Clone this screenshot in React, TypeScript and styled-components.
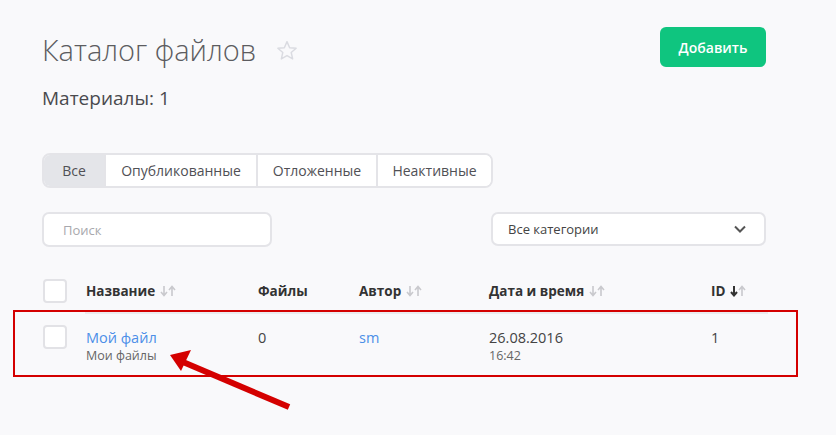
import React from "react";
import styled, { createGlobalStyle } from "styled-components";

const Global = createGlobalStyle`
  html, body { margin: 0; padding: 0; background: #f9f9fb; }
  body { font-family: "Open Sans", "Noto Sans", sans-serif; color: #444; }
  * { box-sizing: border-box; }
`;

const Page = styled.div`
  position: relative;
  width: 836px;
  height: 435px;
  padding: 27px 70px 0 42px;
  overflow: hidden;
`;

const TopRow = styled.div`
  display: flex;
  justify-content: space-between;
  align-items: flex-start;
`;

const TitleWrap = styled.div`
  display: flex;
  align-items: center;
  gap: 20px;
  padding-top: 4px;
`;

const Title = styled.h1`
  margin: 0;
  font-size: 29px;
  font-weight: 300;
  color: #5c5c60;
  line-height: 38px;
`;

const AddButton = styled.button`
  width: 106px;
  height: 40px;
  border: none;
  border-radius: 6px;
  background: #0fc57f;
  color: #fff;
  font-family: inherit;
  font-weight: 600;
  font-size: 14px;
`;

const Count = styled.div`
  margin-top: 16px;
  font-size: 19px;
  color: #4a4a4e;
  line-height: 26px;
`;

const Tabs = styled.div`
  display: inline-flex;
  margin-top: 42px;
  height: 35px;
  border: 2px solid #e4e4e8;
  border-radius: 8px;
  overflow: hidden;
  background: #fff;
`;

const Tab = styled.div<{ $active?: boolean; $w: number }>`
  width: ${(p) => p.$w}px;
  display: flex;
  align-items: center;
  justify-content: center;
  font-size: 14px;
  color: #505055;
  background: ${(p) => (p.$active ? "#e4e5e9" : "#fff")};
  & + & { border-left: 2px solid #e4e4e8; }
`;

const FilterRow = styled.div`
  display: flex;
  justify-content: space-between;
  margin-top: 24px;
`;

const Search = styled.div`
  width: 230px;
  height: 35px;
  border: 2px solid #e4e4e8;
  border-radius: 7px;
  background: #fff;
  display: flex;
  align-items: center;
  padding-left: 19px;
  font-size: 13px;
  color: #a8a8ad;
`;

const Select = styled.div`
  width: 275px;
  height: 34px;
  border: 2px solid #e4e4e8;
  border-radius: 7px;
  background: #fff;
  display: flex;
  align-items: center;
  justify-content: space-between;
  padding: 0 18px 0 15px;
  font-size: 13px;
  color: #444;
`;

const Grid = styled.div`
  display: grid;
  grid-template-columns: 44px 172px 101px 130px 222px 1fr;
  align-items: start;
  width: 726px;
`;

const HeadGrid = styled(Grid)`
  margin-top: 32px;
  align-items: center;
  height: 24px;
`;

const Divider = styled.div`
  margin: 9px 0 0 43px;
  height: 2px;
  background: #ebebee;
  width: 683px;
`;

const RowGrid = styled(Grid)`
  margin-top: 11px;
`;

const Check = styled.div`
  width: 24px;
  height: 24px;
  margin-left: 1px;
  border: 2px solid #e2e2e6;
  border-radius: 4px;
  background: #fff;
`;

const HeadCell = styled.div`
  display: flex;
  align-items: center;
  gap: 5px;
  font-size: 13.5px;
  font-weight: 700;
  color: #333;
`;

const Cell = styled.div`
  display: flex;
  flex-direction: column;
  font-size: 14.5px;
  color: #444;
  line-height: 19px;
  padding-top: 3px;
`;

const Link = styled.span`
  color: #4c8fe8;
`;

const Sub = styled.span`
  font-size: 12.5px;
  color: #666;
  line-height: 18px;
`;

const Highlight = styled.div`
  position: absolute;
  left: 13px;
  top: 310px;
  width: 785px;
  height: 67px;
  border: 2px solid #d40000;
  pointer-events: none;
`;

const Arrow = styled.svg`
  position: absolute;
  left: 0;
  top: 0;
  pointer-events: none;
`;

const SortArrows = ({ active }: { active?: boolean }) => (
  <svg width="16" height="12" viewBox="0 0 16 12">
    <g stroke={active ? "#333" : "#c9c9cd"} strokeWidth={active ? 2 : 1.6} fill="none">
      <path d="M4 1v9M1 7l3 3.5L7 7" />
    </g>
    <g stroke="#c9c9cd" strokeWidth="1.6" fill="none">
      <path d="M12 11V2M9 5l3-3.5L15 5" />
    </g>
  </svg>
);

const Star = () => (
  <svg width="22" height="21" viewBox="0 0 24 23">
    <path
      d="M12 1.8l2.9 6.6 7.1.6-5.4 4.7 1.6 7-6.2-3.7-6.2 3.7 1.6-7L2 9l7.1-.6z"
      fill="none"
      stroke="#dadbe1"
      strokeWidth="1.6"
      strokeLinejoin="round"
    />
  </svg>
);

const Chevron = () => (
  <svg width="12" height="8" viewBox="0 0 12 8">
    <path d="M1 1.5l5 5 5-5" fill="none" stroke="#555" strokeWidth="2" />
  </svg>
);

export default function App() {
  return (
    <>
      <Global />
      <Page>
        <TopRow>
          <TitleWrap>
            <Title>Каталог файлов</Title>
            <Star />
          </TitleWrap>
          <AddButton>Добавить</AddButton>
        </TopRow>
        <Count>Материалы: 1</Count>
        <Tabs>
          <Tab $active $w={60}>Все</Tab>
          <Tab $w={152}>Опубликованные</Tab>
          <Tab $w={120}>Отложенные</Tab>
          <Tab $w={115}>Неактивные</Tab>
        </Tabs>
        <FilterRow>
          <Search>Поиск</Search>
          <Select>
            <span>Все категории</span>
            <Chevron />
          </Select>
        </FilterRow>
        <HeadGrid>
          <Check />
          <HeadCell>Название <SortArrows /></HeadCell>
          <HeadCell>Файлы</HeadCell>
          <HeadCell>Автор <SortArrows /></HeadCell>
          <HeadCell>Дата и время <SortArrows /></HeadCell>
          <HeadCell>ID <SortArrows active /></HeadCell>
        </HeadGrid>
        <Divider />
        <RowGrid>
          <Check />
          <Cell>
            <Link>Мой файл</Link>
            <Sub>Мои файлы</Sub>
          </Cell>
          <Cell>0</Cell>
          <Cell><Link>sm</Link></Cell>
          <Cell>
            <span>26.08.2016</span>
            <Sub>16:42</Sub>
          </Cell>
          <Cell>1</Cell>
        </RowGrid>
        <Highlight />
        <Arrow width="836" height="435" viewBox="0 0 836 435">
          <path d="M289 407L183 362" stroke="#d40000" strokeWidth="6" />
          <path d="M170 355L191 350L181 371Z" fill="#d40000" />
        </Arrow>
      </Page>
    </>
  );
}
